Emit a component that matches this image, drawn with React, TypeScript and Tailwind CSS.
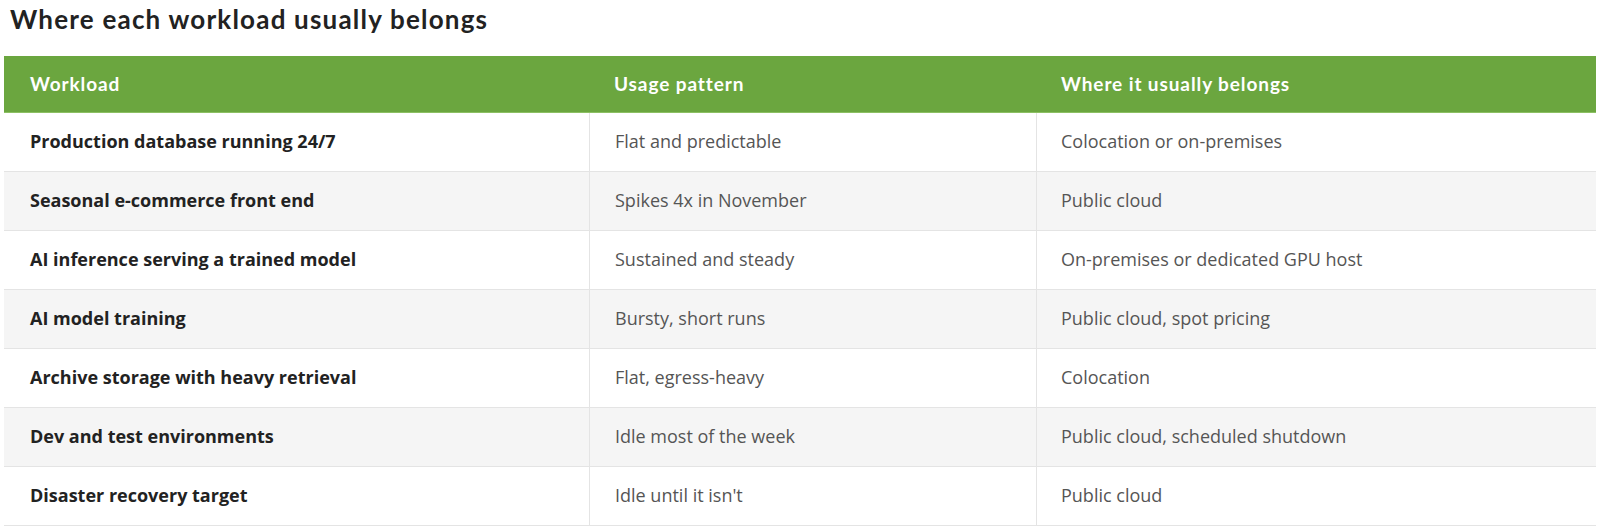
const rows = [
  ["Production database running 24/7", "Flat and predictable", "Colocation or on-premises"],
  ["Seasonal e-commerce front end", "Spikes 4x in November", "Public cloud"],
  ["AI inference serving a trained model", "Sustained and steady", "On-premises or dedicated GPU host"],
  ["AI model training", "Bursty, short runs", "Public cloud, spot pricing"],
  ["Archive storage with heavy retrieval", "Flat, egress-heavy", "Colocation"],
  ["Dev and test environments", "Idle most of the week", "Public cloud, scheduled shutdown"],
  ["Disaster recovery target", "Idle until it isn't", "Public cloud"],
];

export default function App() {
  return (
    <div className="w-[1600px] h-[530px] bg-white px-1 overflow-hidden">
      {/* Title */}
      <h2 className="h-[56px] pl-[6px] pt-[3px] text-[26px] leading-[32px] tracking-[1.2px] font-bold text-[#222] font-['Lato',sans-serif]">
        Where each workload usually belongs
      </h2>

      {/* Table */}
      <div className="w-[1592px]">
        <div className="grid grid-cols-[585px_447px_560px] h-[57px] items-center bg-[#6ba63f] border-b border-[#8cc063] text-white text-[19px] tracking-[0.9px] font-bold font-['Lato',sans-serif]">
          <div className="pl-[26px]">Workload</div>
          <div className="pl-[25px]">Usage pattern</div>
          <div className="pl-[25px]">Where it usually belongs</div>
        </div>
        {rows.map((r, i) => (
          <div
            key={i}
            className={`grid grid-cols-[585px_447px_560px] h-[59px] border-b border-[#e4e4e4] text-[18px] font-['Open_Sans',sans-serif] ${
              i % 2 === 1 ? "bg-[#f5f5f5]" : "bg-white"
            }`}
          >
            <div className="flex items-center pl-[26px] pb-[2px] font-bold text-[#222]">{r[0]}</div>
            <div className="flex items-center pl-[25px] pb-[2px] border-l border-[#e4e4e4] text-[#555]">{r[1]}</div>
            <div className="flex items-center pl-[24px] pb-[2px] border-l border-[#e4e4e4] text-[#555]">{r[2]}</div>
          </div>
        ))}
      </div>
    </div>
  );
}
